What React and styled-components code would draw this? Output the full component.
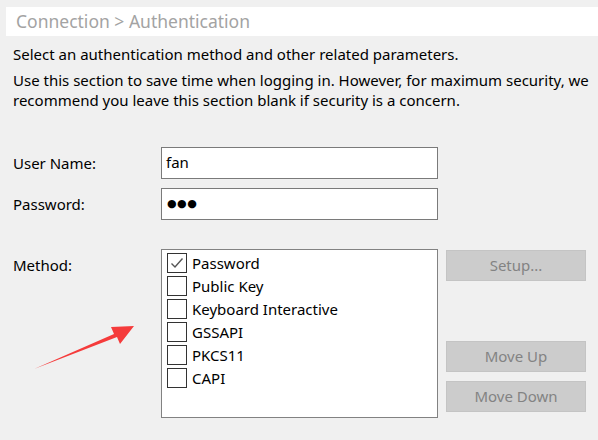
import React from 'react';
import styled, { createGlobalStyle } from 'styled-components';

const Global = createGlobalStyle`
  html, body {
    margin: 0;
    padding: 0;
    background: #f0f0f0;
    overflow: hidden;
  }
  body {
    font-family: "Noto Sans", "DejaVu Sans", sans-serif;
    color: #000;
  }
`;

const Page = styled.div`
  position: relative;
  width: 598px;
  height: 440px;
  padding-top: 7px;
  box-sizing: border-box;
  overflow: hidden;
`;

const Header = styled.div`
  margin-left: 6px;
  height: 29px;
  line-height: 29px;
  background: #fff;
  padding-left: 10px;
  font-size: 17.5px;
  color: #a3a3a3;
  white-space: nowrap;
`;

const Para = styled.p`
  margin: ${(p) => p.$top}px 0 0 13px;
  font-size: 15px;
  line-height: 20px;
  white-space: nowrap;
`;

const Form = styled.div`
  margin-top: 37px;
  margin-left: 13px;
  display: flex;
  flex-direction: column;
`;

const Row = styled.div`
  display: flex;
  align-items: ${(p) => (p.$top ? 'flex-start' : 'center')};
  margin-top: ${(p) => p.$gap || 0}px;
`;

const Label = styled.div`
  width: 148px;
  font-size: 15px;
  padding-top: ${(p) => p.$pad || 0}px;
  flex-shrink: 0;
`;

const Field = styled.div`
  width: 277px;
  height: 32px;
  box-sizing: border-box;
  border: 1px solid #7a7a7a;
  background: #fff;
  padding: 0 4px 2px;
  display: flex;
  align-items: center;
  font-size: 15px;
`;

const Dots = styled.span`
  font-size: 11px;
  letter-spacing: 0.5px;
  padding-left: 1px;
  font-family: "DejaVu Sans", sans-serif;
`;

const List = styled.div`
  width: 277px;
  height: 169px;
  box-sizing: border-box;
  border: 1px solid #828282;
  background: #fff;
  padding: 3px 0 0 5px;
  display: flex;
  flex-direction: column;
  gap: 3px;
`;

const Item = styled.div`
  display: flex;
  align-items: center;
  gap: 5px;
  height: 20px;
  font-size: 15px;
`;

const Box = styled.span`
  width: 20px;
  height: 20px;
  box-sizing: border-box;
  border: 1px solid #333;
  display: flex;
  align-items: center;
  justify-content: center;
  flex-shrink: 0;
`;

const Buttons = styled.div`
  margin-left: 8px;
  display: flex;
  flex-direction: column;
  padding-top: 1px;
`;

const Button = styled.button`
  width: 140px;
  height: 31px;
  margin-top: ${(p) => p.$gap || 0}px;
  border: 1px solid #c4c4c4;
  background: #cccccc;
  color: #838383;
  font-family: "Noto Sans", "DejaVu Sans", sans-serif;
  font-size: 15px;
  padding: 0 0 2px;
`;

const Arrow = styled.svg`
  position: absolute;
  left: 30px;
  top: 318px;
`;

const methods = [
  { name: 'Password', on: true },
  { name: 'Public Key' },
  { name: 'Keyboard Interactive' },
  { name: 'GSSAPI' },
  { name: 'PKCS11' },
  { name: 'CAPI' },
];

export default function App() {
  return (
    <Page>
      <Global />
      <Header>Connection &gt; Authentication</Header>
      <Para $top={8}>Select an authentication method and other related parameters.</Para>
      <Para $top={6}>
        Use this section to save time when logging in. However, for maximum security, we
        <br />
        recommend you leave this section blank if security is a concern.
      </Para>
      <Form>
        <Row>
          <Label>User Name:</Label>
          <Field>fan</Field>
        </Row>
        <Row $gap={9}>
          <Label>Password:</Label>
          <Field>
            <Dots>●●●</Dots>
          </Field>
        </Row>
        <Row $gap={29} $top>
          <Label $pad={6}>Method:</Label>
          <List>
            {methods.map((m) => (
              <Item key={m.name}>
                <Box>
                  {m.on && (
                    <svg width="16" height="16" viewBox="0 0 16 16">
                      <path d="M2.5 8.5 L6 12 L13.5 3.5" fill="none" stroke="#555" strokeWidth="1.4" />
                    </svg>
                  )}
                </Box>
                {m.name}
              </Item>
            ))}
          </List>
          <Buttons>
            <Button>Setup...</Button>
            <Button $gap={60}>Move Up</Button>
            <Button $gap={9}>Move Down</Button>
          </Buttons>
        </Row>
      </Form>
      <Arrow width="110" height="60" viewBox="0 0 110 60">
        <path d="M4 51 L84 16 L81 9 L104 8 L90 26 L87 19 Z" fill="#f53b3b" />
      </Arrow>
    </Page>
  );
}
